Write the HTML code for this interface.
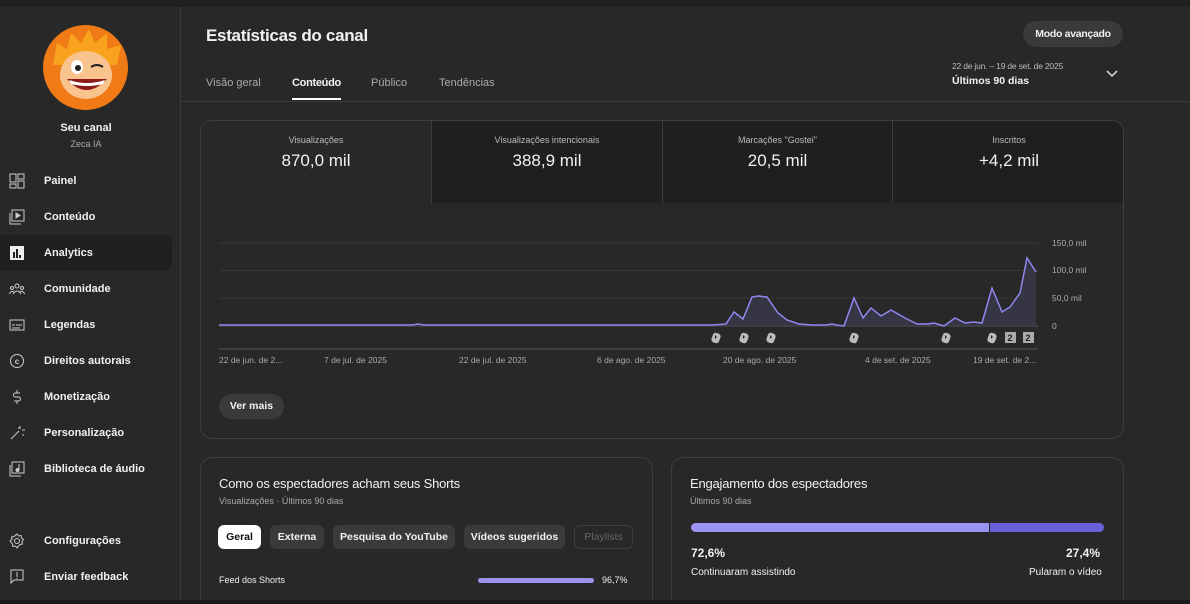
<!DOCTYPE html>
<html><head><meta charset="utf-8"><style>
*{margin:0;padding:0;box-sizing:border-box}
html,body{width:1190px;height:604px;overflow:hidden}
body{background:#282828;font-family:"Liberation Sans",sans-serif;color:#f1f1f1;position:relative}
.topbar{position:absolute;left:0;top:0;width:1190px;height:7px;background:#1f1f1f}
.botbar{position:absolute;left:0;top:600px;width:1190px;height:4px;background:#1a1a1a;z-index:5}
.side{position:absolute;left:0;top:7px;width:181px;height:593px;border-right:1px solid #3a3a3a}
.av{position:absolute;left:43px;top:18px;width:85px;height:85px;border-radius:50%;background:#f07a16;overflow:hidden}
.nav{position:absolute;left:0;width:172px;height:36px;font-size:11px;font-weight:bold;display:flex;align-items:center}
.nav span{position:absolute;left:44px}
.nav svg{position:absolute;left:9px;top:10px}
.sel{background:#1f1f1f;border-radius:0 8px 8px 0}
.abs{position:absolute}
.card{position:absolute;border:1px solid #3e3e3e;border-radius:12px}
.m{position:absolute;top:0;height:82px;text-align:center;border-right:1px solid #3e3e3e;background:#1f1f1f}
.m .l{font-size:9px;color:#bbb;margin-top:14px}
.m .v{font-size:17px;margin-top:6px}
.chip{position:absolute;top:525px;height:24px;border-radius:6px;background:#3a3a3a;font-size:10.5px;font-weight:bold;display:flex;align-items:center;justify-content:center}
</style></head><body>
<div class="topbar"></div>
<div class="side">
<div class="av"><svg width="85" height="85" viewBox="0 0 85 85"><path d="M10 40 L14 18 L24 24 L28 8 L38 18 L46 4 L52 18 L64 8 L64 24 L78 20 L74 40 Z" fill="#f8a21d"/><ellipse cx="43" cy="50" rx="26" ry="24" fill="#f9c38e"/><ellipse cx="34" cy="42" rx="6" ry="7" fill="#fff"/><circle cx="35" cy="43" r="3" fill="#222"/><path d="M48 42 q6 -4 12 0" stroke="#222" stroke-width="2" fill="none"/><path d="M24 54 q19 22 40 0 z" fill="#8b1a1a"/><path d="M26 55 q18 6 36 0 l-2 4 q-16 4 -32 0z" fill="#fff"/></svg></div>
<div class="abs" style="left:0;width:172px;top:115px;text-align:center;font-size:11px;font-weight:bold">Seu canal</div>
<div class="abs" style="left:0;width:172px;top:132px;text-align:center;font-size:9px;color:#aaa">Zeca IA</div>
<div class="nav" style="top:156px"><svg width="16" height="16" fill="none" stroke="#ccc"><rect x="1" y="1" width="6" height="8"/><rect x="9" y="1" width="6" height="5"/><rect x="1" y="11" width="6" height="4"/><rect x="9" y="8" width="6" height="7"/></svg><span>Painel</span></div>
<div class="nav" style="top:192px"><svg width="16" height="16" fill="none" stroke="#ccc"><rect x="3" y="1" width="12" height="11"/><path d="M1 4v11h11"/><path d="M7 4l4 2.5-4 2.5z" fill="#ccc"/></svg><span>Conteúdo</span></div>
<div class="nav sel" style="top:228px"><svg width="16" height="16"><rect x="1" y="1" width="14" height="14" fill="#eee"/><rect x="4" y="7" width="2" height="6" fill="#1f1f1f"/><rect x="7" y="4" width="2" height="9" fill="#1f1f1f"/><rect x="10" y="10" width="2" height="3" fill="#1f1f1f"/></svg><span>Analytics</span></div>
<div class="nav" style="top:264px"><svg width="16" height="16" fill="none" stroke="#ccc"><circle cx="8" cy="5" r="2"/><circle cx="3" cy="7" r="1.5"/><circle cx="13" cy="7" r="1.5"/><path d="M4 13q4-6 8 0M0 13q3-4 5-2M16 13q-3-4-5-2"/></svg><span>Comunidade</span></div>
<div class="nav" style="top:300px"><svg width="16" height="16" fill="none" stroke="#ccc"><rect x="1" y="3" width="14" height="10"/><path d="M3 8h3M7 8h6M3 11h8"/></svg><span>Legendas</span></div>
<div class="nav" style="top:336px"><svg width="16" height="16" fill="none" stroke="#ccc"><circle cx="8" cy="8" r="6.5"/><text x="8" y="11" font-size="8" fill="#ccc" stroke="none" text-anchor="middle" font-family="Liberation Sans" font-weight="bold">c</text></svg><span>Direitos autorais</span></div>
<div class="nav" style="top:372px"><svg width="16" height="16" fill="none" stroke="#ccc"><path d="M11 4H6.5a2 2 0 0 0 0 4h3a2 2 0 0 1 0 4H5M8 1v3M8 12v3"/></svg><span>Monetização</span></div>
<div class="nav" style="top:408px"><svg width="16" height="16" fill="none" stroke="#ccc"><path d="M2 14l8-8"/><path d="M11 1v3M13 5h3M9 3h2M14 9v2" /></svg><span>Personalização</span></div>
<div class="nav" style="top:444px"><svg width="16" height="16" fill="none" stroke="#ccc"><rect x="3" y="1" width="12" height="11"/><path d="M1 4v11h11M10 3v6"/><circle cx="8.5" cy="9" r="1.5" fill="#ccc"/></svg><span>Biblioteca de áudio</span></div>
<div class="nav" style="top:516px"><svg width="16" height="16" fill="none" stroke="#ccc"><circle cx="8" cy="8" r="2.5"/><path d="M8 1l1.5 2 2.5-.5.5 2.5 2 1.5-1.5 2 .5 2.5-2.5.5L8 15l-1.5-2-2.5.5-.5-2.5L1 8l2-1.5L2.5 4l2.5-.5z"/></svg><span>Configurações</span></div>
<div class="nav" style="top:552px"><svg width="16" height="16" fill="none" stroke="#ccc"><path d="M2 1h12v10H5l-3 3z"/><path d="M8 3v5M8 9v1"/></svg><span>Enviar feedback</span></div>
</div>

<div class="abs" style="left:206px;top:26px;font-size:17px;font-weight:bold;letter-spacing:-0.3px">Estatísticas do canal</div>
<div class="abs" style="left:1023px;top:21px;width:100px;height:26px;border-radius:13px;background:#3a3a3a;font-size:10.5px;font-weight:bold;text-align:center;line-height:26px;letter-spacing:-0.3px">Modo avançado</div>
<div class="abs" style="left:206px;top:77px;font-size:11px;color:#aaa">Visão geral</div>
<div class="abs" style="left:292px;top:77px;font-size:11px;font-weight:bold;letter-spacing:-0.3px">Conteúdo</div>
<div class="abs" style="left:292px;top:98px;width:49px;height:2px;background:#fff"></div>
<div class="abs" style="left:371px;top:77px;font-size:11px;color:#aaa">Público</div>
<div class="abs" style="left:439px;top:77px;font-size:11px;color:#aaa">Tendências</div>
<div class="abs" style="left:952px;top:61px;font-size:8.5px;color:#bbb;letter-spacing:-0.2px">22 de jun. – 19 de set. de 2025</div>
<div class="abs" style="left:952px;top:75px;font-size:10.5px;font-weight:bold">Últimos 90 dias</div>
<svg class="abs" style="left:1106px;top:70px" width="12" height="8"><path d="M1 1l5 5 5-5" stroke="#ddd" fill="none" stroke-width="1.5"/></svg>
<div class="abs" style="left:181px;top:101px;width:1009px;height:1px;background:#3a3a3a"></div>

<div class="card" style="left:200px;top:120px;width:924px;height:319px;overflow:hidden">
<div class="m" style="left:0;width:231px;background:#282828"><div class="l">Visualizações</div><div class="v">870,0 mil</div></div>
<div class="m" style="left:231px;width:231px"><div class="l">Visualizações intencionais</div><div class="v">388,9 mil</div></div>
<div class="m" style="left:462px;width:230px"><div class="l">Marcações "Gostei"</div><div class="v">20,5 mil</div></div>
<div class="m" style="left:692px;width:232px;border-right:none"><div class="l">Inscritos</div><div class="v">+4,2 mil</div></div>
</div>
<svg class="abs" style="left:0;top:0" width="1190" height="604">
<g stroke="#383838"><line x1="219" y1="243" x2="1038" y2="243"/><line x1="219" y1="270.5" x2="1038" y2="270.5"/><line x1="219" y1="298" x2="1038" y2="298"/></g>
<line x1="219" y1="326" x2="1038" y2="326" stroke="#555"/>
<rect x="219" y="348" width="819" height="2" fill="#3f3f3f"/>
<path d="M219 325 L412 325 L418 324 L424 325 L712 325 L726 324 L734 312 L743 319 L752 297 L758 296 L767 297 L778 313 L787 320 L799 324 L812 325 L826 325 L832 324 L836 325 L844 326 L854 298 L863 318 L871 308 L881 316 L891 310 L905 318 L917 324 L928 324 L934 323 L944 326 L955 318 L965 323 L974 322 L982 323 L992 288 L1002 312 L1010 307 L1020 293 L1027 258 L1036 272 L1036 326 L219 326Z" fill="#3a3a4e" opacity="0.7"/>
<path d="M219 325 L412 325 L418 324 L424 325 L712 325 L726 324 L734 312 L743 319 L752 297 L758 296 L767 297 L778 313 L787 320 L799 324 L812 325 L826 325 L832 324 L836 325 L844 326 L854 298 L863 318 L871 308 L881 316 L891 310 L905 318 L917 324 L928 324 L934 323 L944 326 L955 318 L965 323 L974 322 L982 323 L992 288 L1002 312 L1010 307 L1020 293 L1027 258 L1036 272" stroke="#8f87ef" stroke-width="1.5" fill="none"/>
<g font-family="Liberation Sans" font-size="8.5" fill="#aaa">
<text x="1052" y="246">150,0 mil</text><text x="1052" y="273">100,0 mil</text><text x="1052" y="301">50,0 mil</text><text x="1052" y="329">0</text>
<text x="219" y="363">22 de jun. de 2...</text><text x="324" y="363">7 de jul. de 2025</text><text x="459" y="363">22 de jul. de 2025</text><text x="597" y="363">6 de ago. de 2025</text><text x="723" y="363">20 de ago. de 2025</text><text x="865" y="363">4 de set. de 2025</text><text x="973" y="363">19 de set. de 2...</text>
</g>
<g fill="#bbb">
<g id="s"><rect x="712" y="333" width="8" height="10" rx="3" transform="rotate(20 716 338)"/><path d="M715 335l2 2-2 2z" fill="#282828"/></g>
<use href="#s" x="28"/><use href="#s" x="55"/><use href="#s" x="138"/><use href="#s" x="230"/><use href="#s" x="276"/>
<rect x="1005" y="332" width="11" height="11" fill="#aaa"/><rect x="1023" y="332" width="11" height="11" fill="#aaa"/>
<text x="1007.5" y="341" fill="#222" font-family="Liberation Sans" font-size="9" font-weight="bold">2</text><text x="1025.5" y="341" fill="#222" font-family="Liberation Sans" font-size="9" font-weight="bold">2</text>
</g>
</svg>
<div class="abs" style="left:219px;top:394px;width:65px;height:25px;border-radius:13px;background:#3a3a3a;font-size:10.5px;font-weight:bold;text-align:center;line-height:25px">Ver mais</div>

<div class="card" style="left:200px;top:457px;width:453px;height:155px"></div>
<div class="abs" style="left:219px;top:476px;font-size:13px;letter-spacing:-0.2px">Como os espectadores acham seus Shorts</div>
<div class="abs" style="left:219px;top:496px;font-size:9px;color:#aaa">Visualizações · Últimos 90 dias</div>
<div class="chip" style="left:218px;width:43px;background:#fff;color:#0f0f0f">Geral</div>
<div class="chip" style="left:270px;width:54px">Externa</div>
<div class="chip" style="left:333px;width:122px">Pesquisa do YouTube</div>
<div class="chip" style="left:464px;width:101px">Vídeos sugeridos</div>
<div class="chip" style="left:574px;width:59px;background:none;border:1px solid #3e3e3e;color:#666;font-weight:normal">Playlists</div>
<div class="abs" style="left:219px;top:575px;font-size:9px">Feed dos Shorts</div>
<div class="abs" style="left:478px;top:578px;width:116px;height:5px;border-radius:3px;background:#9b93f2"></div>
<div class="abs" style="left:602px;top:575px;font-size:9px">96,7%</div>

<div class="card" style="left:671px;top:457px;width:453px;height:155px"></div>
<div class="abs" style="left:690px;top:476px;font-size:13px;letter-spacing:-0.2px">Engajamento dos espectadores</div>
<div class="abs" style="left:690px;top:496px;font-size:9px;color:#aaa">Últimos 90 dias</div>
<div class="abs" style="left:691px;top:523px;width:298px;height:9px;border-radius:5px 0 0 5px;background:#9b93f2"></div>
<div class="abs" style="left:990px;top:523px;width:114px;height:9px;border-radius:0 5px 5px 0;background:#6a5fd6"></div>
<div class="abs" style="left:691px;top:546px;font-size:12px;font-weight:bold">72,6%</div>
<div class="abs" style="left:1066px;top:546px;font-size:12px;font-weight:bold">27,4%</div>
<div class="abs" style="left:691px;top:567px;font-size:10px">Continuaram assistindo</div>
<div class="abs" style="left:1029px;top:567px;font-size:10px">Pularam o vídeo</div>
<div class="botbar"></div>
</body></html>
